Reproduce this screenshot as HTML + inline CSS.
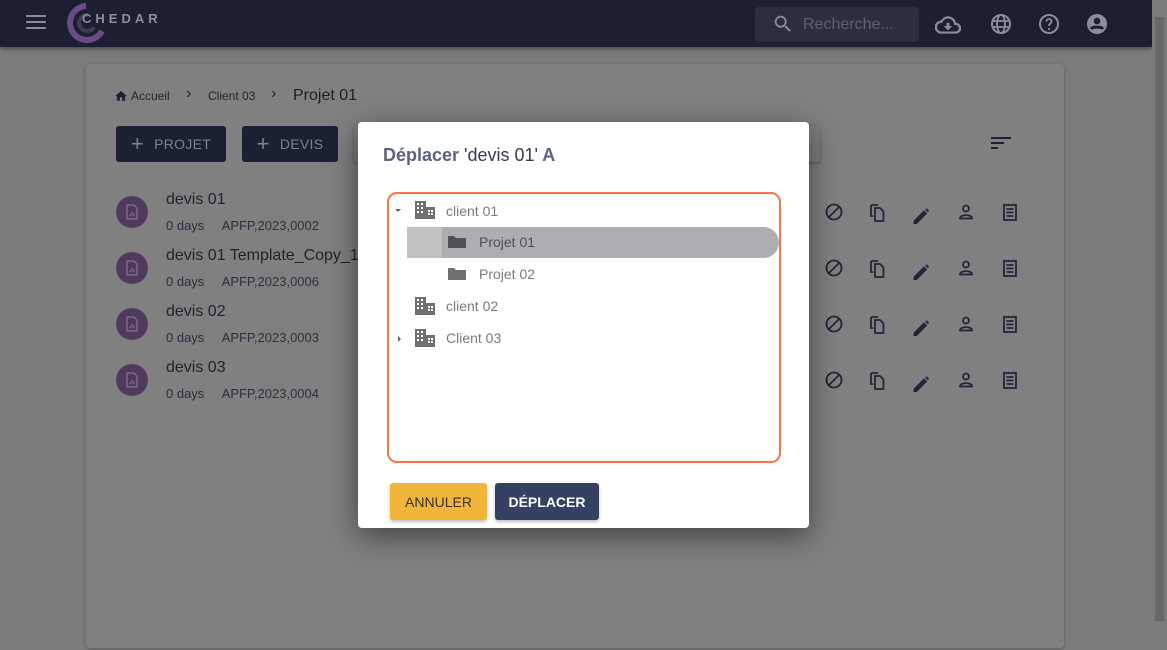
<!DOCTYPE html>
<html><head><meta charset="utf-8"><style>
*{box-sizing:border-box;margin:0;padding:0}
body{width:1167px;height:650px;overflow:hidden;background:#7b7b7b;font-family:"Liberation Sans",Roboto,sans-serif;position:relative}
.abs{position:absolute}
.hdr{left:0;top:0;width:1152px;height:47px;background:#1b1f31;box-shadow:0 2px 4px rgba(0,0,0,.4)}
.sb{left:1152px;top:0;width:15px;height:650px;background:#7a7a7a}
.card{left:86px;top:64px;width:978px;height:584px;background:#808080;border-radius:4px;box-shadow:0 1px 3px rgba(0,0,0,.25)}
.btn{background:#1c2033;color:#7d818e;border-radius:3px;font-size:14px;display:flex;align-items:center;justify-content:center;gap:10px;letter-spacing:.3px}
.av{width:32px;height:32px;border-radius:50%;background:#4f3a5e;left:116px}
.t{left:166px;font-size:16px;color:#202230}
.s{left:166px;font-size:13px;color:#2e3040}
.dlg{left:358px;top:122px;width:451px;height:406px;background:#fff;border-radius:4px;box-shadow:0 8px 30px rgba(0,0,0,.5)}
.tree{left:29px;top:70px;width:394px;height:271px;border:2.5px solid #f47644;border-radius:10px}
.ti{font-size:14px;color:#7a7a7a;position:absolute}
</style></head><body>
<div class="abs hdr">
 <svg class="abs" style="left:26px;top:14px" width="20" height="16"><rect y="1" width="20" height="2" fill="#8a8d99"/><rect y="7" width="20" height="2" fill="#8a8d99"/><rect y="13" width="20" height="2" fill="#8a8d99"/></svg>
 <svg class="abs" style="left:66px;top:3px" width="40" height="40"><path d="M20 3 A17 17 0 1 0 36 28" stroke="#6b4a8a" stroke-width="6" fill="none"/><path d="M22 12 A8 8 0 1 0 28 24" stroke="#3b3f55" stroke-width="4" fill="none"/></svg>
 <div class="abs" style="left:82px;top:11px;color:#8c8f99;font-size:13px;font-weight:bold;letter-spacing:4px">CHEDAR</div>
 <div class="abs" style="left:755px;top:7px;width:164px;height:35px;background:#2a2e40;border-radius:4px"></div>
 <svg class="abs" style="left:772px;top:13px" width="22" height="22" viewBox="0 0 24 24"><path fill="#8a8d99" d="M15.5 14h-.8l-.3-.3A6.5 6.5 0 1 0 9.5 16a6.5 6.5 0 0 0 4.2-1.6l.3.3v.8l5 5 1.5-1.5-5-5zm-6 0a4.5 4.5 0 1 1 0-9 4.5 4.5 0 0 1 0 9z"/></svg>
 <div class="abs" style="left:803px;top:16px;color:#5d6070;font-size:16px">Recherche...</div>
 <svg class="abs" style="left:935px;top:12px" width="26" height="26" viewBox="0 0 24 24"><path fill="#8a8d99" d="M19.4 10A7.5 7.5 0 0 0 5.4 8 6 6 0 0 0 6 20h13a5 5 0 0 0 .4-10zM19 18H6a4 4 0 0 1-.4-8l1-.1.5-.9a5.5 5.5 0 0 1 10.3 1.5l.3 1.5H19a3 3 0 0 1 0 6zm-5.6-8h-2.8v3H8l4 4 4-4h-2.6z"/></svg>
 <svg class="abs" style="left:989px;top:12px" width="24" height="24" viewBox="0 0 24 24"><circle cx="12" cy="12" r="9" stroke="#8a8d99" stroke-width="2" fill="none"/><ellipse cx="12" cy="12" rx="4" ry="9" stroke="#8a8d99" stroke-width="1.8" fill="none"/><path d="M3 9h18M3 15h18" stroke="#8a8d99" stroke-width="1.8"/></svg>
 <svg class="abs" style="left:1037px;top:12px" width="24" height="24" viewBox="0 0 24 24"><circle cx="12" cy="12" r="9" stroke="#8a8d99" stroke-width="2" fill="none"/><path d="M9.5 9.5a2.5 2.5 0 1 1 3.5 2.3c-.7.4-1 .9-1 1.7v.5" stroke="#8a8d99" stroke-width="1.8" fill="none"/><circle cx="12" cy="17" r="1.1" fill="#8a8d99"/></svg>
 <svg class="abs" style="left:1085px;top:12px" width="24" height="24" viewBox="0 0 24 24"><circle cx="12" cy="12" r="10" fill="#8a8d99"/><circle cx="12" cy="9" r="3.3" fill="#1b1f31"/><path d="M6 17c1.5-2.5 10.5-2.5 12 0" stroke="#1b1f31" stroke-width="3" fill="none"/></svg>
</div>
<div class="abs sb"><div class="abs" style="left:3px;top:17px;width:9px;height:604px;background:#676767"></div></div>
<div class="abs card"></div>
<svg class="abs" style="left:114px;top:89px" width="14" height="13" viewBox="0 0 24 22"><path fill="#1c2033" d="M10 20v-6h4v6h5v-8h3L12 3 2 12h3v8z"/></svg>
<div class="abs" style="left:131px;top:89px;font-size:12px;color:#22252f">Accueil</div>
<div class="abs" style="left:186px;top:85px;font-size:16px;color:#22252f">&#8250;</div>
<div class="abs" style="left:208px;top:89px;font-size:12px;color:#22252f">Client 03</div>
<div class="abs" style="left:271px;top:85px;font-size:16px;color:#22252f">&#8250;</div>
<div class="abs" style="left:293px;top:87px;font-size:16px;color:#1c1e28">Projet 01</div>
<div class="abs btn" style="left:116px;top:126px;width:110px;height:36px"><span style="font-size:22px">+</span>PROJET</div>
<div class="abs btn" style="left:242px;top:126px;width:96px;height:36px"><span style="font-size:22px">+</span>DEVIS</div>
<div class="abs" style="left:354px;top:126px;width:466px;height:36px;background:#7f7f7f;border-radius:3px;box-shadow:0 1px 3px rgba(0,0,0,.3)"></div>
<svg class="abs" style="left:991px;top:137px" width="20" height="14"><rect width="20" height="2" fill="#1c2033"/><rect y="5" width="13" height="2" fill="#1c2033"/><rect y="10" width="7" height="2" fill="#1c2033"/></svg>

<svg class="abs" style="left:116px;top:196px" width="32" height="200">
 <defs><g id="a"><circle cx="16" cy="16" r="16" fill="#4f3a5e"/><path d="M11 9h7l3 3v11H11z" fill="none" stroke="#7e6a8c" stroke-width="1.4"/><path d="M14 20v-2M16 20v-4M18 20v-3" stroke="#7e6a8c" stroke-width="1.2"/></g></defs>
 <use href="#a"/><use href="#a" y="56"/><use href="#a" y="112"/><use href="#a" y="168"/>
</svg>
<div class="abs t" style="top:191px">devis 01</div><div class="abs s" style="top:218px">0 days &nbsp;&nbsp;&nbsp; APFP,2023,0002</div>
<div class="abs t" style="top:247px">devis 01 Template_Copy_1</div><div class="abs s" style="top:274px">0 days &nbsp;&nbsp;&nbsp; APFP,2023,0006</div>
<div class="abs t" style="top:303px">devis 02</div><div class="abs s" style="top:330px">0 days &nbsp;&nbsp;&nbsp; APFP,2023,0003</div>
<div class="abs t" style="top:359px">devis 03</div><div class="abs s" style="top:386px">0 days &nbsp;&nbsp;&nbsp; APFP,2023,0004</div>

<svg class="abs" style="left:820px;top:196px" width="210" height="200">
 <defs><g id="r" fill="none" stroke="#23263a" stroke-width="1.8">
  <circle cx="14" cy="16" r="7.5"/><path d="M9 21l10-10"/>
  <path d="M51 9v11h2M51 9h7"/><path d="M55 12h5l3.5 3.5V25H55z"/>
  <path d="M94 25l10-10 2.5 2.5-10 10H94z" fill="#23263a" stroke-width="1"/><path d="M106 13l2.5 2.5" stroke-width="2"/>
  <circle cx="146" cy="12.5" r="3"/><path d="M140 22.5c0-4.5 12-4.5 12 0z"/>
  <rect x="184" y="9" width="12" height="15"/><path d="M186.5 13h7M186.5 16.5h7M186.5 20h7"/>
 </g></defs>
 <use href="#r"/><use href="#r" y="56"/><use href="#r" y="112"/><use href="#r" y="168"/>
</svg>

<div class="abs dlg">
 <div class="abs" style="left:25px;top:23px;font-size:18px;color:#5b6380;font-weight:bold">Déplacer <span style="color:#343a55;font-weight:normal">'devis 01'</span> A</div>
 <div class="abs tree">
  <div class="abs" style="left:18px;top:33px;width:37px;height:31px;background:#c1c1c1"></div>
  <div class="abs" style="left:53px;top:33px;width:337px;height:31px;background:#adaeb1;border-radius:0 16px 16px 0"></div>
  <svg class="abs" style="left:0;top:0" width="120" height="160">
   <defs><g id="b" fill="#707070"><rect x="0" y="0" width="11" height="18"/><rect x="11" y="6" width="9" height="12"/><g fill="#fff"><rect x="2" y="2" width="2" height="2"/><rect x="6" y="2" width="2" height="2"/><rect x="2" y="6" width="2" height="2"/><rect x="6" y="6" width="2" height="2"/><rect x="2" y="10" width="2" height="2"/><rect x="6" y="10" width="2" height="2"/><rect x="13" y="9" width="2" height="2"/><rect x="16" y="9" width="2" height="2"/><rect x="13" y="12" width="2" height="2"/><rect x="16" y="12" width="2" height="2"/></g></g></defs>
   <use href="#b" x="26" y="7"/><use href="#b" x="26" y="103"/><use href="#b" x="26" y="135"/>
   <path d="M6 15l3 3 3-3z" fill="#666"/><path d="M9 142l3 3-3 3z" fill="#666"/>
   <path d="M59 42h6l2 2h10v10H59z" fill="#505155"/>
   <path d="M59 74h6l2 2h10v10H59z" fill="#707070"/>
  </svg>
  <div class="ti" style="left:57px;top:9px">client 01</div>
  <div class="ti" style="left:90px;top:40px;color:#4e4f52">Projet 01</div>
  <div class="ti" style="left:90px;top:72px">Projet 02</div>
  <div class="ti" style="left:57px;top:104px">client 02</div>
  <div class="ti" style="left:57px;top:136px">Client 03</div>
 </div>
 <div class="abs" style="left:32px;top:361px;width:97px;height:37px;background:#f2b53c;border-radius:3px;box-shadow:0 2px 3px rgba(0,0,0,.25);display:flex;align-items:center;justify-content:center;font-size:14px;color:#3a3020">ANNULER</div>
 <div class="abs" style="left:137px;top:361px;width:104px;height:37px;background:#364063;border-radius:3px;box-shadow:0 2px 3px rgba(0,0,0,.25);display:flex;align-items:center;justify-content:center;font-size:14px;color:#fff;font-weight:bold">DÉPLACER</div>
</div>
</body></html>
